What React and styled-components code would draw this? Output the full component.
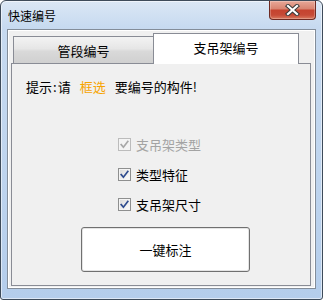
import styled, { createGlobalStyle } from "styled-components";

const GlobalStyle = createGlobalStyle`
  html, body {
    margin: 0;
    padding: 0;
    background: #ffffff;
  }
  * {
    box-sizing: border-box;
  }
`;

const FONT = `"Noto Sans CJK SC", "Noto Sans", sans-serif`;

const CheckIcon = ({ disabled }) => (
  <svg width="13" height="13" viewBox="0 0 13 13">
    <path
      d="M3.2 6.6 L5.4 9.2 L9.8 3.4"
      fill="none"
      stroke={disabled ? "#a8a8a8" : "#2f4c8f"}
      strokeWidth="1.7"
      strokeLinecap="square"
    />
  </svg>
);

const CloseIcon = () => (
  <svg width="15" height="12" viewBox="0 0 15 12">
    <path
      d="M3 2 L12 10 M12 2 L3 10"
      stroke="#3a3a3a"
      strokeWidth="4.2"
      strokeLinecap="square"
    />
    <path
      d="M3 2 L12 10 M12 2 L3 10"
      stroke="#ffffff"
      strokeWidth="2.2"
      strokeLinecap="square"
    />
  </svg>
);

const options = [
  { label: "支吊架类型", disabled: true },
  { label: "类型特征", disabled: false },
  { label: "支吊架尺寸", disabled: false },
];

const App = () => {
  return (
    <>
      <GlobalStyle />
      <Frame>
        <TitleBar>
          <Title>快速编号</Title>
          <CloseBtn>
            <CloseIcon />
          </CloseBtn>
        </TitleBar>
        <Client>
          <TabStrip>
            <Tab>管段编号</Tab>
            <Tab active>支吊架编号</Tab>
          </TabStrip>
          <Pane>
            <Hint>
              提示<Colon>:</Colon>请<Highlight>框选</Highlight>要编号的构件!
            </Hint>
            <Options>
              {options.map((o) => (
                <Option key={o.label} disabled={o.disabled}>
                  <Box disabled={o.disabled}>
                    <CheckIcon disabled={o.disabled} />
                  </Box>
                  {o.label}
                </Option>
              ))}
            </Options>
            <MarkBtn>一键标注</MarkBtn>
          </Pane>
        </Client>
      </Frame>
    </>
  );
};

const Frame = styled.div`
  width: 323px;
  height: 300px;
  display: flex;
  flex-direction: column;
  padding: 0 6px 10px 6px;
  border: 1px solid #3e4b5a;
  border-radius: 6px 6px 3px 3px;
  background: linear-gradient(180deg, #dbe7f5 0px, #c7daf0 26px, #bed4ee 60%, #b4cdeb 100%);
  box-shadow: inset 0 0 0 1px rgba(255, 255, 255, 0.55);
  font-family: ${FONT};
`;

const TitleBar = styled.div`
  height: 28px;
  display: flex;
  justify-content: space-between;
  align-items: flex-start;
  padding-left: 1px;
`;

const Title = styled.div`
  margin-top: 7px;
  font-size: 12px;
  line-height: 16px;
  color: #000;
`;

const CloseBtn = styled.div`
  width: 47px;
  height: 19px;
  display: flex;
  align-items: center;
  justify-content: center;
  border: 1px solid #6e2a22;
  border-top: none;
  border-radius: 0 0 4px 4px;
  background: linear-gradient(
    180deg,
    #e8a898 0%,
    #d98572 42%,
    #c5432f 52%,
    #c64a36 78%,
    #d97a60 100%
  );
  box-shadow: inset 0 0 0 1px rgba(255, 255, 255, 0.25);
`;

const Client = styled.div`
  flex: 1;
  display: flex;
  flex-direction: column;
  padding: 3px 4px 2px 3px;
  border: 1px solid #838d99;
  background: #f0f0f0;
  box-shadow: inset 0 0 0 1px #ffffff;
`;

const TabStrip = styled.div`
  height: 30px;
  display: flex;
  align-items: flex-end;
  padding-left: 2px;
`;

const Tab = styled.div`
  position: relative;
  z-index: ${(p) => (p.active ? 1 : 0)};
  width: ${(p) => (p.active ? "146px" : "140px")};
  height: ${(p) => (p.active ? "31px" : "27px")};
  margin-bottom: ${(p) => (p.active ? "-1px" : "0")};
  display: flex;
  align-items: center;
  justify-content: center;
  padding-bottom: ${(p) => (p.active ? "3px" : "0")};
  border: 1px solid #898c95;
  border-bottom: none;
  border-right: ${(p) => (p.active ? "1px solid #898c95" : "none")};
  background: ${(p) =>
    p.active ? "#ffffff" : "linear-gradient(180deg, #f3f3f3 0%, #e6e6e6 45%, #d9d9d9 55%, #d0d0d0 100%)"};
  font-size: 13px;
  color: #000;
`;

const Pane = styled.div`
  height: 223px;
  display: flex;
  flex-direction: column;
  align-items: flex-start;
  padding: 14px 0 0 14px;
  border: 1px solid #898c95;
  background: #f0f0f0;
`;

const Hint = styled.div`
  font-size: 13px;
  line-height: 18px;
  color: #000;
`;

const Colon = styled.span`
  margin: 0 1px 0 1px;
`;

const Highlight = styled.span`
  color: #f7a400;
  margin: 0 9px 0 9px;
`;

const Options = styled.div`
  display: flex;
  flex-direction: column;
  margin: 33px 0 0 92px;
`;

const Option = styled.label`
  height: 30px;
  display: flex;
  align-items: center;
  gap: 5px;
  font-size: 13px;
  color: ${(p) => (p.disabled ? "#a3a3a3" : "#000")};
`;

const Box = styled.span`
  width: 13px;
  height: 13px;
  display: flex;
  border: 1px solid ${(p) => (p.disabled ? "#bcbcbc" : "#8e8f8f")};
  background: ${(p) =>
    p.disabled ? "#f4f4f4" : "linear-gradient(135deg, #d8d8d8 0%, #f0f0f0 60%, #fbfbfb 100%)"};
  box-shadow: inset 0 0 0 1px #f4f4f4;

  svg {
    margin: -1px;
  }
`;

const MarkBtn = styled.button`
  width: 169px;
  height: 45px;
  margin: 8px 0 0 55px;
  padding: 0;
  border: 1px solid #707070;
  border-radius: 3px;
  background: #ffffff;
  box-shadow: inset 0 0 0 1px #e4e4e4;
  font-family: ${FONT};
  font-size: 13px;
  color: #000;
`;

export default App;
